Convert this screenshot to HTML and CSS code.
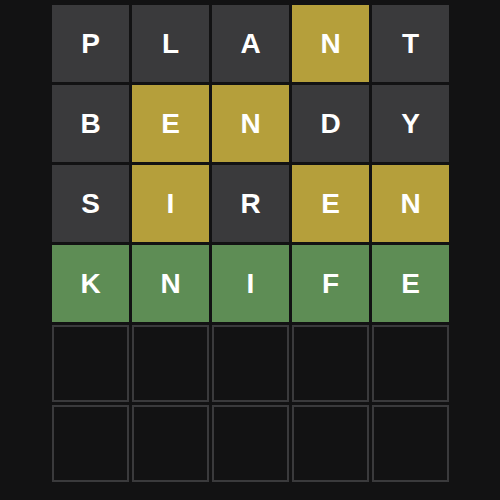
FILE: index.html
```html
<!DOCTYPE html>
<html lang="en">
<head>
    <meta charset="UTF-8">
    <title>Wordle Board</title>
    <link rel="stylesheet" href="styles.css">
</head>
<body>
    <div class="board">
        <div class="row">
            <div class="tile absent">P</div>
            <div class="tile absent">L</div>
            <div class="tile absent">A</div>
            <div class="tile present">N</div>
            <div class="tile absent">T</div>
        </div>
        <div class="row">
            <div class="tile absent">B</div>
            <div class="tile present">E</div>
            <div class="tile present">N</div>
            <div class="tile absent">D</div>
            <div class="tile absent">Y</div>
        </div>
        <div class="row">
            <div class="tile absent">S</div>
            <div class="tile present">I</div>
            <div class="tile absent">R</div>
            <div class="tile present">E</div>
            <div class="tile present">N</div>
        </div>
        <div class="row">
            <div class="tile correct">K</div>
            <div class="tile correct">N</div>
            <div class="tile correct">I</div>
            <div class="tile correct">F</div>
            <div class="tile correct">E</div>
        </div>
        <div class="row">
            <div class="tile empty"></div>
            <div class="tile empty"></div>
            <div class="tile empty"></div>
            <div class="tile empty"></div>
            <div class="tile empty"></div>
        </div>
        <div class="row">
            <div class="tile empty"></div>
            <div class="tile empty"></div>
            <div class="tile empty"></div>
            <div class="tile empty"></div>
            <div class="tile empty"></div>
        </div>
    </div>
</body>
</html>
```

FILE: styles.css
```css
/* Page */
body {
    margin: 0;
    padding: 0;
    background-color: #121213;
    font-family: "Liberation Sans", Arial, sans-serif;
}

/* Board */
.board {
    display: grid;
    grid-template-rows: repeat(6, 77px);
    gap: 3px;
    padding: 5px 0 0 52px;
}
.row {
    display: grid;
    grid-template-columns: repeat(5, 77px);
    gap: 3px;
}

/* Tiles */
.tile {
    display: flex;
    align-items: center;
    justify-content: center;
    box-sizing: border-box;
    color: white;
    font-size: 28px;
    font-weight: bold;
    text-transform: uppercase;
}
.absent {
    background-color: #3a3a3c;
}
.present {
    background-color: #b59f3b;
}
.correct {
    background-color: #5e8d55;
}
.empty {
    border: 2px solid #3a3a3c;
}
```
